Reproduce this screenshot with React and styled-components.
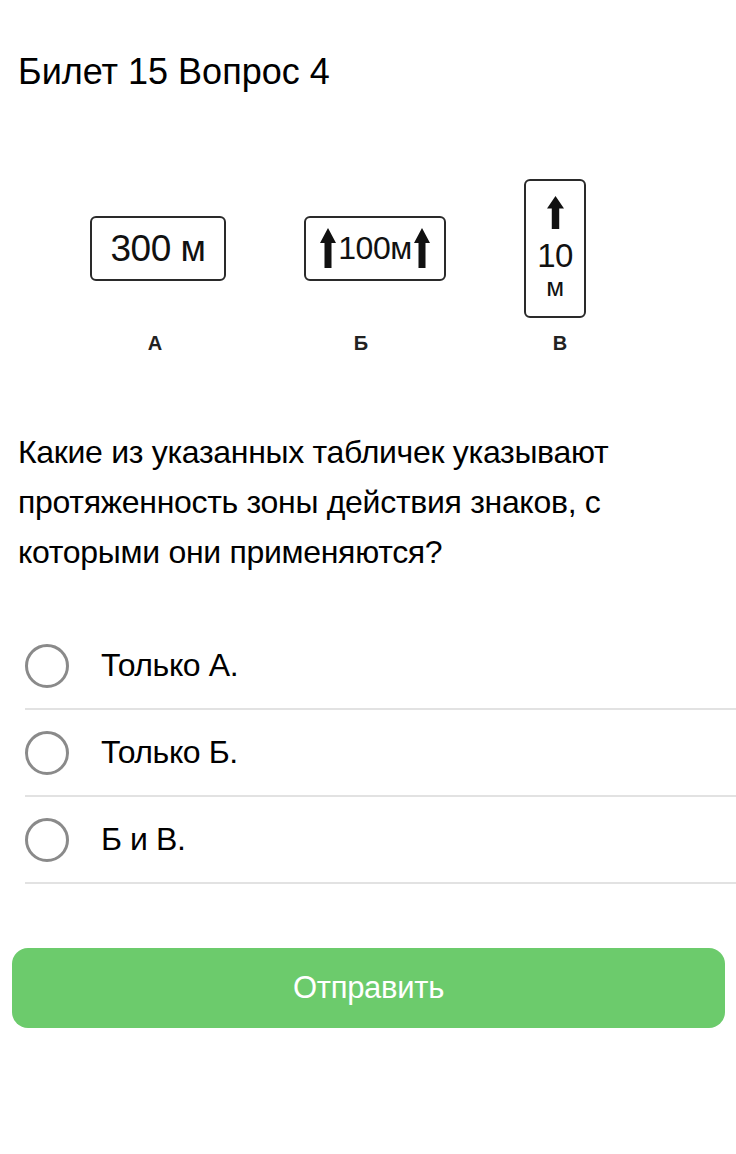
import React from "react";
import styled, { createGlobalStyle } from "styled-components";

const GlobalStyle = createGlobalStyle`
  html, body {
    margin: 0;
    padding: 0;
    background: #ffffff;
  }
  body {
    font-family: "Liberation Sans", Arial, sans-serif;
    color: #000;
  }
`;

const Page = styled.div`
  width: 736px;
  min-height: 1154px;
  display: flex;
  flex-direction: column;
  background: #fff;
`;

const Title = styled.h1`
  margin: 50px 0 0 18px;
  font-size: 36px;
  font-weight: 400;
  line-height: 44px;
`;

const Figure = styled.div`
  margin: 84px 0 0 90px;
  display: grid;
  grid-template-columns: 136px 142px 62px;
  grid-template-rows: 140px auto;
  column-gap: 78px;
  row-gap: 14px;
  align-items: center;
`;

const Plate = styled.div`
  box-sizing: border-box;
  border: 2px solid #2a2a2a;
  border-radius: 6px;
  display: flex;
  align-items: center;
  justify-content: center;
  height: ${(p) => p.h || 65}px;
  width: ${(p) => p.w || 136}px;
  gap: 2px;
  flex-direction: ${(p) => (p.vertical ? "column" : "row")};
  font-family: "Liberation Sans", Arial, sans-serif;
  color: #111;
`;

const PlateText = styled.span`
  font-size: ${(p) => p.size}px;
  line-height: 1;
  letter-spacing: -0.5px;
  margin-top: ${(p) => p.top || 0}px;
`;

const Label = styled.div`
  justify-self: center;
  margin-left: ${(p) => p.shift || 0}px;
  font-family: "Liberation Sans", Arial, sans-serif;
  font-weight: 700;
  font-size: 20px;
  color: #222;
`;

const Arrow = ({ w = 16, h = 40 }) => (
  <svg width={w} height={h} viewBox="0 0 16 40" preserveAspectRatio="none">
    <path d="M8 0 L16 15 L11.5 15 L11.5 40 L4.5 40 L4.5 15 L0 15 Z" fill="#111" />
  </svg>
);

const Question = styled.p`
  margin: 72px 0 0 18px;
  max-width: 600px;
  font-size: 32px;
  line-height: 50px;
  letter-spacing: -0.3px;
`;

const Options = styled.div`
  margin-top: 46px;
  display: flex;
  flex-direction: column;
`;

const OptionRow = styled.label`
  display: flex;
  align-items: center;
  gap: 32px;
  height: 87px;
  margin-left: 25px;
  border-bottom: 2px solid #e2e2e2;
  box-sizing: border-box;
  cursor: pointer;
`;

const Radio = styled.span`
  width: 44px;
  height: 44px;
  box-sizing: border-box;
  border: 3.5px solid #8a8a8a;
  border-radius: 50%;
  flex-shrink: 0;
`;

const OptionText = styled.span`
  font-size: 32px;
  letter-spacing: -0.4px;
  color: #000;
`;

const SubmitButton = styled.button`
  margin: 64px 11px 0 12px;
  height: 80px;
  border: none;
  border-radius: 16px;
  background: #6ccb6c;
  color: #fff;
  font-family: "Liberation Sans", Arial, sans-serif;
  font-size: 31px;
  letter-spacing: -0.3px;
  cursor: pointer;
`;

const answers = ["Только А.", "Только Б.", "Б и В."];

export default function App() {
  return (
    <>
      <GlobalStyle />
      <Page>
        <Title>Билет 15 Вопрос 4</Title>
        <Figure>
          <Plate w={136} h={65}>
            <PlateText size={37}>300 м</PlateText>
          </Plate>
          <Plate w={142} h={65}>
            <Arrow />
            <PlateText size={32}>100м</PlateText>
            <Arrow />
          </Plate>
          <Plate w={62} h={139} vertical>
            <Arrow w={17} h={33} />
            <PlateText size={33} top={8}>10</PlateText>
            <PlateText size={26}>м</PlateText>
          </Plate>
          <Label shift={-6}>А</Label>
          <Label shift={-28}>Б</Label>
          <Label shift={10}>В</Label>
        </Figure>
        <Question>
          Какие из указанных табличек указывают протяженность зоны действия
          знаков, с которыми они применяются?
        </Question>
        <Options>
          {answers.map((a) => (
            <OptionRow key={a}>
              <Radio />
              <OptionText>{a}</OptionText>
            </OptionRow>
          ))}
        </Options>
        <SubmitButton>Отправить</SubmitButton>
      </Page>
    </>
  );
}
